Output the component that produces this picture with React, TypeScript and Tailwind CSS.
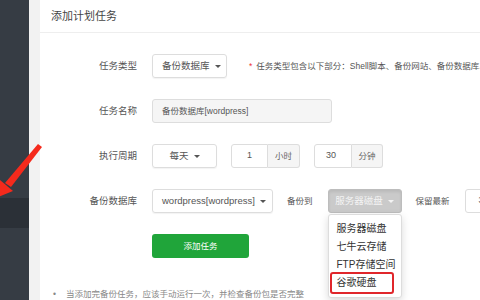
import React from "react";

const Caret = ({ color = "border-t-[#555]" }: { color?: string }) => (
    <span className={`inline-block w-0 h-0 ml-[5px] border-l-[3px] border-r-[3px] border-t-[3px] border-l-transparent border-r-transparent ${color}`} />
);

const Label: React.FC<{ children: React.ReactNode }> = ({ children }) => (
    <div className="w-[97px] shrink-0 text-right text-[9.5px] text-[#555] mr-[15px]">{children}</div>
);

const menuItems = ["服务器磁盘", "七牛云存储", "FTP存储空间", "谷歌硬盘"];

export default function App() {
    return (
        <div className="relative flex w-[480px] h-[300px] overflow-hidden bg-white font-['Liberation_Sans','Noto_Sans_CJK_SC',sans-serif]">
            {/* sidebar */}
            <aside className="w-[29px] shrink-0 bg-[#363c44] flex flex-col">
                <div className="h-[198px]" />
                <div className="h-[30px] bg-[#2b3037]" />
            </aside>
            <div className="w-[11px] shrink-0 bg-[#f2f2f2]" />

            <main className="flex-1 min-w-0">
                <div className="h-[33px] border-b border-[#eeeeee] pl-[11px] flex items-center text-[11px] text-[#444]">
                    添加计划任务
                </div>

                <div className="pt-[21px]">
                    {/* 任务类型 */}
                    <div className="flex items-center h-[24px] mb-[21px] whitespace-nowrap">
                        <Label>任务类型</Label>
                        <div className="w-[75px] h-[24px] shrink-0 flex items-center pl-[9px] border border-[#dddddd] rounded-[3px] shadow-[0_1px_1px_rgba(0,0,0,0.05)] text-[9.5px] text-[#555]">
                            备份数据库<Caret />
                        </div>
                        <span className="ml-[22px] text-[8.5px] text-[#e33]">*</span>
                        <span className="ml-[4px] text-[8.5px] text-[#555]">任务类型包含以下部分：Shell脚本、备份网站、备份数据库、释放内存</span>
                    </div>

                    {/* 任务名称 */}
                    <div className="flex items-center h-[24px] mb-[21px]">
                        <Label>任务名称</Label>
                        <div className="w-[180px] h-[24px] flex items-center pl-[9px] bg-[#f5f5f5] border border-[#dddddd] rounded-[3px] text-[8.5px] text-[#555]">
                            备份数据库[wordpress]
                        </div>
                    </div>

                    {/* 执行周期 */}
                    <div className="flex items-center h-[24px] mb-[21px]">
                        <Label>执行周期</Label>
                        <div className="w-[65px] h-[24px] flex items-center justify-center border border-[#dddddd] rounded-[3px] shadow-[0_1px_1px_rgba(0,0,0,0.05)] text-[9.5px] text-[#555]">
                            每天<Caret />
                        </div>
                        <div className="ml-[14px] flex h-[24px]">
                            <div className="w-[37px] flex items-center justify-center border border-[#dddddd] rounded-l-[3px] text-[9px] text-[#555]">1</div>
                            <div className="w-[32px] flex items-center justify-center border border-l-0 border-[#dddddd] bg-[#f5f5f5] rounded-r-[3px] text-[8.5px] text-[#666]">小时</div>
                        </div>
                        <div className="ml-[14px] flex h-[24px]">
                            <div className="w-[38px] flex items-center pl-[11px] border border-[#dddddd] rounded-l-[3px] text-[9px] text-[#555]">30</div>
                            <div className="w-[31px] flex items-center justify-center border border-l-0 border-[#dddddd] bg-[#f5f5f5] rounded-r-[3px] text-[8.5px] text-[#666]">分钟</div>
                        </div>
                    </div>

                    {/* 备份数据库 */}
                    <div className="flex items-center h-[24px] mb-[21px] whitespace-nowrap">
                        <Label>备份数据库</Label>
                        <div className="w-[121px] h-[24px] shrink-0 flex items-center pl-[9px] border border-[#dddddd] rounded-[3px] shadow-[0_1px_1px_rgba(0,0,0,0.05)] text-[9.5px] text-[#555]">
                            wordpress[wordpress]<Caret />
                        </div>
                        <span className="ml-[14px] text-[8.5px] text-[#555]">备份到</span>
                        <div className="relative ml-[15px] shrink-0">
                            <div className="w-[74px] h-[24px] flex items-center justify-center border border-[#bdbdbd] bg-[#cacaca] rounded-[3px] shadow-[inset_0_2px_3px_rgba(0,0,0,0.08)] text-[9.5px] text-[#f4f4f4]">
                                服务器磁盘<Caret color="border-t-[#f4f4f4]" />
                            </div>
                            <ul className="absolute left-0 top-full mt-[1px] w-[74px] py-[5px] bg-white border border-[#dddddd] rounded-[3px] shadow-[0_3px_8px_rgba(0,0,0,0.15)] z-10">
                                {menuItems.map((item, i) => (
                                    <li key={item} className="relative h-[18px] leading-[18px] pl-[8px] text-[10px] text-[#333]">
                                        {item}
                                        {i === menuItems.length - 1 && (
                                            <span className="absolute left-[1px] right-[7px] -top-[2px] -bottom-[2px] border-2 border-[#e0262b] rounded-[3px]" />
                                        )}
                                    </li>
                                ))}
                            </ul>
                        </div>
                        <span className="ml-[14px] text-[8.5px] text-[#555]">保留最新</span>
                        <div className="ml-[15px] w-[40px] h-[24px] shrink-0 flex items-center pl-[13px] border border-[#dddddd] rounded-[3px] text-[9px] text-[#555]">3</div>
                    </div>

                    {/* 添加任务 */}
                    <div className="flex h-[24px] pl-[112px]">
                        <button className="w-[97px] h-[24px] bg-[#20a53a] rounded-[3px] text-[8.5px] text-white">添加任务</button>
                    </div>

                    <div className="mt-[30px] pl-[13px] flex items-center text-[8.5px] text-[#888] whitespace-nowrap">
                        <span className="w-[13px]">•</span>
                        当添加完备份任务，应该手动运行一次，并检查备份包是否完整
                    </div>
                </div>
            </main>

            {/* red annotation arrow */}
            <svg className="absolute left-0 top-[140px] w-[50px] h-[60px] pointer-events-none" viewBox="0 0 50 60">
                <polygon points="38,4 42,7 11,47 5,43" fill="#f52a1c" />
                <polygon points="0,40 13,51 -2,57" fill="#f52a1c" />
            </svg>
        </div>
    );
}
